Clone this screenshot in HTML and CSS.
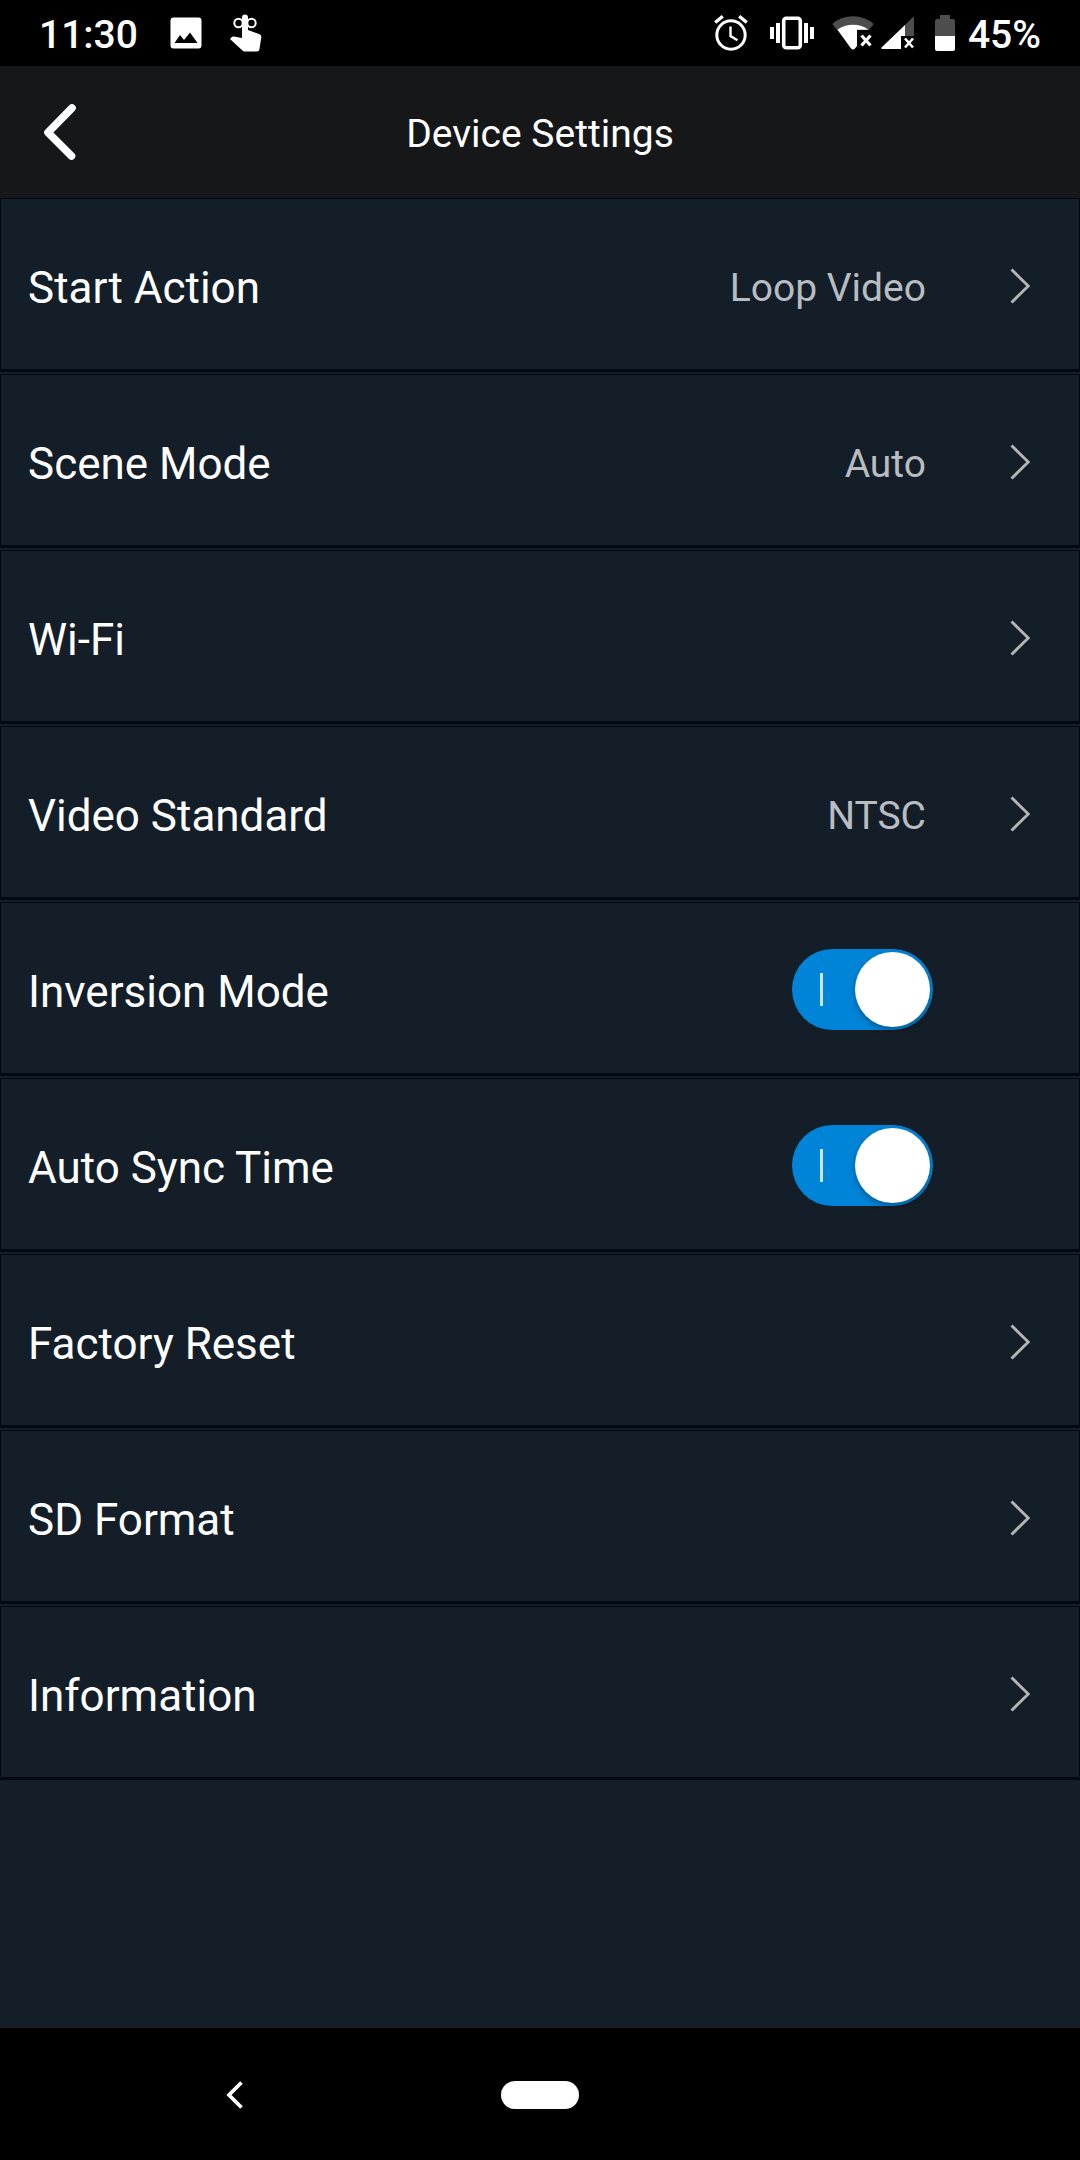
FILE: index.html
```html
<!DOCTYPE html>
<html lang="en">
<head>
<meta charset="utf-8">
<meta name="viewport" content="width=device-width, initial-scale=1">
<title>Device Settings</title>
<link rel="stylesheet" href="styles.css">
</head>
<body>
<svg class="sprite" aria-hidden="true">
  <symbol id="chevron" viewBox="0 0 20 36"><path d="M1.500 1.500 18.300 18 1.500 34.500" fill="none" stroke="currentColor" stroke-width="2.900"/></symbol>
</svg>
<div class="screen">
  <div class="status">
    <div class="status-left">
      <span class="clock">11:30</span>
      <svg class="icon-image" width="32" height="32" viewBox="0 0 32 32" aria-hidden="true"><path fill="#fff" fill-rule="evenodd" d="M3.500 .5h25a3 3 0 0 1 3 3v25a3 3 0 0 1-3 3h-25a3 3 0 0 1-3-3v-25a3 3 0 0 1 3-3zM4.500 26h23l-7.500-10.500-6 7.500-4-5z"/></svg>
      <svg class="icon-touch" width="32" height="38" viewBox="0 0 32 38" aria-hidden="true"><path fill="#fff" d="M12 3.500a3 3 0 0 1 6 0V16l11 4c1.600.6 2.500 1.600 2.300 3.300L29.500 35c-.3 1.700-1.300 2.500-2.700 2.500H15c-1.200 0-2-.4-2.800-1.200L0 25l1.300-1.500c.8-.9 1.700-1.100 2.800-.9L12 24z"/><circle cx="8.500" cy="9" r="4.200" fill="none" stroke="#fff" stroke-width="2"/><circle cx="21.500" cy="9" r="4.200" fill="none" stroke="#fff" stroke-width="2"/></svg>
    </div>
    <div class="status-right">
      <svg class="icon-alarm" width="34" height="36" viewBox="0 0 34 36" aria-hidden="true"><g fill="none" stroke="#fff"><circle cx="17" cy="20" r="14.200" stroke-width="3"/><path d="M16.500 11.500v9.500l7 4.200" stroke-width="2.400"/><path d="M1.200 7.500 8.800 1.300M25.200 1.300l7.600 6.200" stroke-width="3.400"/></g></svg>
      <svg class="icon-vibrate" width="44" height="34" viewBox="0 0 44 34" aria-hidden="true"><rect x="13.700" y="2.200" width="16.600" height="29.600" rx="2.500" fill="none" stroke="#fff" stroke-width="3.600"/><path d="M0 11h4v12H0zM6 7h4v20H6zM34 7h4v20h-4zM40 11h4v12h-4z" fill="#fff"/></svg>
      <svg class="icon-wifi" width="42" height="34" viewBox="0 0 42 34" aria-hidden="true"><path fill="#4d4d4d" d="M.3 8Q9 .3 21 .3T41.700 8L36 15H6z"/><path fill="#fff" d="M5.500 13.800Q12 8.700 21 8.700T36.500 13.800H25V30l-2 2.500q-2 2-4 0z"/><path d="M25 14h17v20H25z"/><path d="m29.500 19.500 9 10m0-10-9 10" stroke="#fff" stroke-width="3.200"/></svg>
      <svg class="icon-signal" width="34" height="34" viewBox="0 0 34 34" aria-hidden="true"><path fill="#4d4d4d" d="M24 9 32 1q1-.6 1 1v18h-9z"/><path fill="#fff" d="M24 9v11h-4v13H1q-1.500-.6 0-2z"/><path d="m24 22.500 8 9m0-9-8 9" stroke="#fff" stroke-width="2.600"/></svg>
      <svg class="icon-battery" width="20" height="36" viewBox="0 0 20 36" aria-hidden="true"><path fill="#4d4d4d" d="M5 0h10v4h3q2 0 2 2v15H0V6q0-2 2-2h3z"/><path fill="#fff" d="M0 21h20v13q0 2-2 2H2q-2 0-2-2z"/></svg>
      <span class="charge">45%</span>
    </div>
  </div>

  <header class="header">
    <button class="back" type="button" aria-label="Back"><svg width="34" height="58" viewBox="0 0 34 58" aria-hidden="true"><path d="M29 5 5 29.500 28.500 53" fill="none" stroke="#fff" stroke-width="7.600" stroke-linecap="round" stroke-linejoin="round"/></svg></button>
    <h1 class="title">Device Settings</h1>
  </header>

  <main>
    <ul class="list">
      <li><button class="row" type="button"><span class="label">Start Action</span><span class="value">Loop Video</span><svg class="chevron" aria-hidden="true"><use href="#chevron"/></svg></button></li>
      <li><button class="row" type="button"><span class="label">Scene Mode</span><span class="value">Auto</span><svg class="chevron" aria-hidden="true"><use href="#chevron"/></svg></button></li>
      <li><button class="row" type="button"><span class="label">Wi-Fi</span><svg class="chevron" aria-hidden="true"><use href="#chevron"/></svg></button></li>
      <li><button class="row" type="button"><span class="label">Video Standard</span><span class="value">NTSC</span><svg class="chevron" aria-hidden="true"><use href="#chevron"/></svg></button></li>
      <li><label class="row row-switch"><span class="label">Inversion Mode</span><input class="switch" type="checkbox" role="switch" checked></label></li>
      <li><label class="row row-switch"><span class="label">Auto Sync Time</span><input class="switch" type="checkbox" role="switch" checked></label></li>
      <li><button class="row" type="button"><span class="label">Factory Reset</span><svg class="chevron" aria-hidden="true"><use href="#chevron"/></svg></button></li>
      <li><button class="row" type="button"><span class="label">SD Format</span><svg class="chevron" aria-hidden="true"><use href="#chevron"/></svg></button></li>
      <li><button class="row" type="button"><span class="label">Information</span><svg class="chevron" aria-hidden="true"><use href="#chevron"/></svg></button></li>
    </ul>
  </main>

  <nav class="navbar" aria-label="System">
    <button class="nav-back" type="button" aria-label="System back"><svg width="18" height="28" viewBox="0 0 18 28" aria-hidden="true"><path d="M15.500 1.500 3 14l12.500 12.500" fill="none" stroke="#fff" stroke-width="3.800"/></svg></button>
    <button class="nav-home" type="button" aria-label="Home"></button>
  </nav>
</div>
</body>
</html>
```
FILE: styles.css
```css
* {
  box-sizing: border-box;
}

body {
  margin: 0;
  background: #141e29;
  color: #fff;
  font-family: Roboto, "Noto Sans", sans-serif;
}

button {
  margin: 0;
  padding: 0;
  border: 0;
  background: none;
  color: inherit;
  font: inherit;
  text-align: left;
  cursor: pointer;
}

svg {
  display: block;
  flex: none;
}

.sprite {
  display: none;
}

.screen {
  display: flex;
  flex-direction: column;
  min-height: 100vh;
}

/* Status bar */
.status {
  display: flex;
  justify-content: space-between;
  height: 66px;
  padding: 0 39px;
  background: #000;
  font-size: 39px;
  font-weight: 500;
  line-height: 48px;
}

.status-left,
.status-right {
  display: flex;
  align-items: center;
}

.clock,
.charge {
  padding-top: 4px;
}

.icon-image {
  margin-left: 32px;
}

.icon-touch {
  margin-left: 28px;
}

.icon-vibrate {
  margin-left: 22px;
}

.icon-wifi {
  margin-left: 18px;
}

.icon-signal {
  margin-left: 7px;
}

.icon-battery {
  margin-left: 20px;
}

.charge {
  margin-left: 13px;
}

/* Title bar */
.header {
  display: grid;
  grid-template-columns: 1fr auto 1fr;
  align-items: center;
  height: 132px;
  padding: 0 43px;
  background: #161719;
}

.back {
  justify-self: start;
}

.title {
  margin: 0;
  padding-top: 4px;
  font-size: 39px;
  font-weight: 400;
  line-height: 48px;
}

/* Settings list */
.list {
  display: grid;
  gap: 2px;
  margin: 0;
  padding: 0;
  list-style: none;
}

.row {
  display: flex;
  align-items: center;
  width: 100%;
  height: 174px;
  padding: 3px 49px 0 27px;
  border: 1px solid #000a12;
  border-bottom-width: 3px;
}

.row-switch {
  padding-right: 146px;
}

.label {
  flex: 1;
  padding-top: 4px;
  font-size: 44px;
  line-height: 52px;
}

.value {
  padding-top: 4px;
  color: #b9bcc0;
  font-size: 39px;
  line-height: 52px;
}

.chevron {
  width: 20px;
  height: 36px;
  margin-left: 84px;
  color: #b5b5b5;
}

.switch {
  display: flex;
  align-items: center;
  justify-content: space-between;
  appearance: none;
  width: 141px;
  height: 81px;
  margin: 0;
  padding: 0 3px 0 28px;
  border-radius: 41px;
  background: #0084d8;
}

.switch::before {
  content: "";
  width: 3px;
  height: 33px;
  background: #cbe5f7;
}

.switch::after {
  content: "";
  width: 75px;
  height: 75px;
  border-radius: 50%;
  background: #fff;
  box-shadow: 0 3px 6px rgba(0, 0, 0, 0.3);
}

.switch:not(:checked) {
  flex-direction: row-reverse;
  padding: 0 28px 0 3px;
  background: #4a5561;
}

/* System navigation */
.navbar {
  display: grid;
  grid-template-columns: 1fr 78px 1fr;
  align-items: center;
  height: 132px;
  margin-top: auto;
  padding-top: 1px;
  background: #000;
}

.nav-back {
  justify-self: start;
  margin-left: 206px;
  padding: 20px;
}

.nav-home {
  height: 28px;
  border-radius: 14px;
  background: #fff;
}
```
